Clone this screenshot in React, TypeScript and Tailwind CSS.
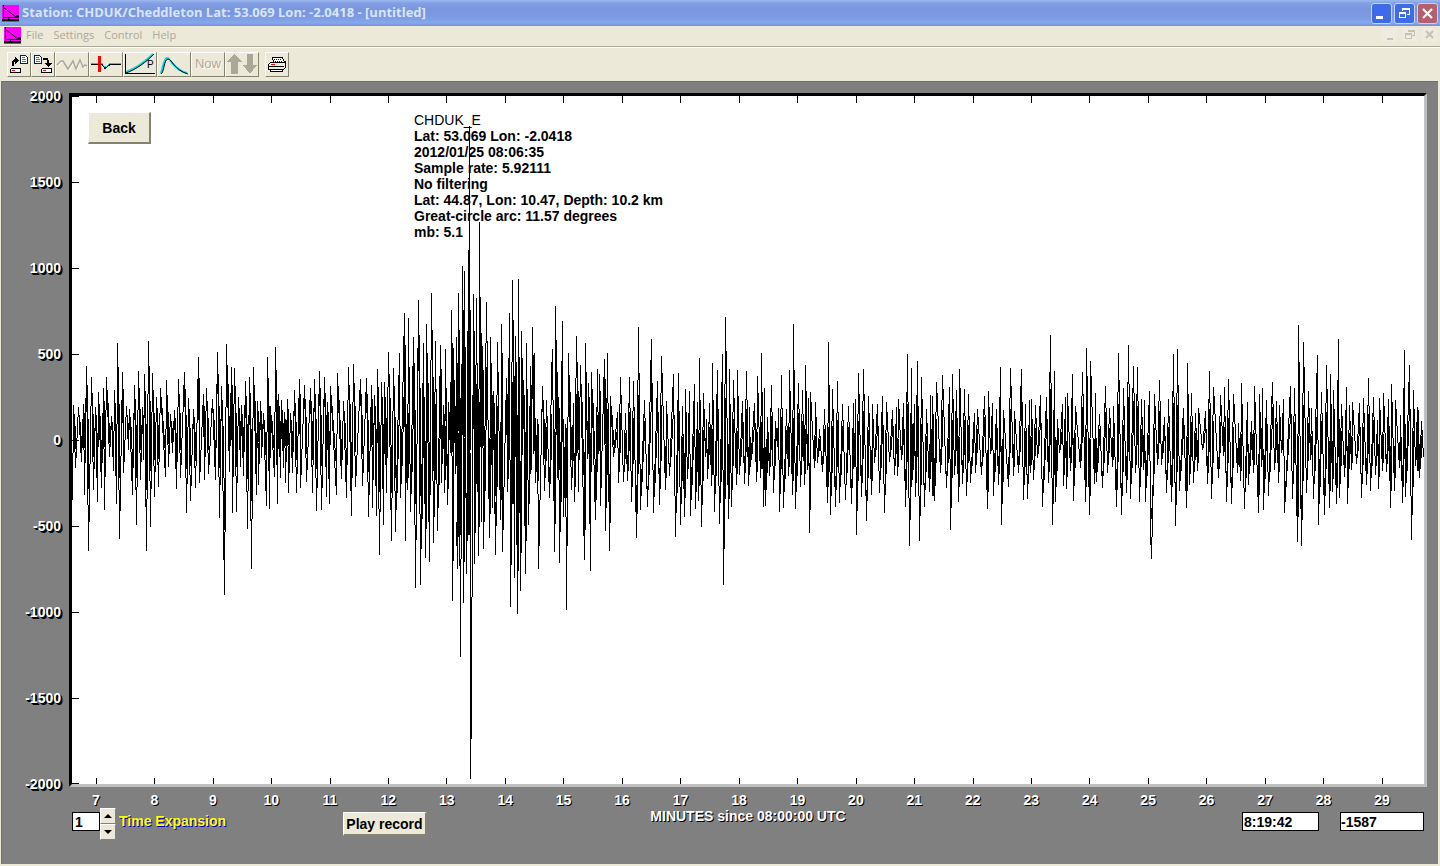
import { useState } from 'react';
import type { ReactNode } from 'react';

// Trace extremes as x, y pairs on the 1352 x 688 plot area (offset 72, 96)
const CRESTS = [
    73,405, 83,404, 86,366, 91,377, 95,407, 98,392, 103,388, 106,377, 111,416, 114,390, 117,343, 122,372, 129,409, 134,385, 138,371,
    142,407, 144,374, 148,341, 152,373, 156,397, 160,388, 166,380, 170,414, 174,410, 178,379, 184,372, 188,398, 193,409, 198,357,
    203,394, 206,388, 212,399, 217,352, 221,386, 226,344, 231,367, 234,368, 238,397, 241,405, 245,381, 249,377, 253,367, 257,401,
    260,401, 263,413, 267,357, 270,406, 275,347, 278,394, 281,400, 284,412, 287,399, 290,413, 294,390, 299,379, 304,385, 310,388,
    314,379, 319,371, 324,377, 327,402, 330,386, 337,373, 343,401, 348,367, 353,364, 360,379, 366,378, 371,385, 374,395, 377,369,
    381,382, 384,382, 388,352, 393,368, 399,353, 404,313, 408,318, 413,337, 418,300, 423,343, 426,324, 431,293, 435,341, 440,345,
    445,349, 448,402, 451,310, 453,348, 456,337, 458,293, 462,266, 464,271, 468,250, 469,126, 473,294, 476,298, 479,222, 482,346,
    486,302, 490,337, 493,391, 497,342, 501,324, 506,378, 509,313, 512,280, 515,336, 518,279, 521,331, 523,380, 526,343, 530,366,
    532,327, 534,353, 537,419, 542,386, 546,400, 551,374, 552,349, 555,306, 558,397, 562,321, 568,353, 576,336, 580,365, 585,343,
    588,383, 591,372, 597,369, 599,374, 604,359, 607,353, 610,396, 617,412, 620,377, 625,413, 629,377, 633,381, 638,327, 644,400,
    651,339, 657,381, 661,356, 666,401, 673,374, 678,373, 682,406, 685,389, 689,391, 694,384, 699,358, 703,393, 706,419, 712,363,
    717,370, 722,354, 725,317, 729,369, 733,380, 737,370, 742,401, 746,371, 749,407, 754,403, 757,376, 761,353, 764,388, 767,417,
    771,385, 775,421, 781,375, 786,409, 789,370, 793,324, 798,383, 802,390, 805,365, 808,398, 810,392, 815,402, 819,429, 824,409,
    828,342, 832,389, 837,381, 842,404, 848,406, 853,403, 855,399, 858,373, 863,369, 868,396, 872,404, 877,404, 882,396, 886,402,
    892,410, 898,399, 903,403, 907,354, 911,368, 917,361, 921,377, 926,409, 930,395, 932,396, 936,382, 942,375, 949,387, 952,374,
    956,390, 959,369, 964,389, 968,394, 974,413, 977,409, 984,396, 988,391, 992,403, 996,409, 1000,367, 1003,410, 1010,368, 1014,411,
    1021,369, 1025,404, 1029,400, 1031,399, 1035,405, 1040,395, 1046,397, 1050,335, 1054,371, 1057,419, 1062,404, 1065,397, 1067,393,
    1072,374, 1075,406, 1082,372, 1086,348, 1090,361, 1095,393, 1099,414, 1105,386, 1109,408, 1113,406, 1118,353, 1123,388, 1128,345,
    1133,366, 1137,367, 1141,399, 1144,400, 1149,391, 1154,394, 1159,380, 1164,417, 1168,399, 1173,354, 1177,349, 1183,408, 1187,363,
    1191,393, 1195,413, 1198,408, 1205,411, 1209,371, 1213,387, 1220,395, 1224,387, 1228,379, 1233,394, 1238,423, 1241,383, 1247,402,
    1254,386, 1259,394, 1262,388, 1266,400, 1272,382, 1279,405, 1283,399, 1290,386, 1294,388, 1298,325, 1303,342, 1308,391, 1311,408,
    1317,355, 1321,392, 1326,365, 1330,374, 1333,390, 1338,339, 1341,404, 1346,387, 1349,405, 1352,402, 1359,403, 1363,398, 1368,378,
    1373,397, 1379,398, 1383,393, 1388,399, 1391,384, 1395,400, 1400,415, 1404,350, 1409,365, 1413,390, 1417,407, 1421,421,
];

const TROUGHS = [
    72,500, 75,468, 81,462, 84,495, 88,551, 93,490, 97,502, 101,488, 104,510, 109,457, 113,471, 116,504, 119,539, 123,473, 128,450,
    132,495, 136,525, 140,480, 146,551, 150,527, 154,497, 158,487, 165,477, 172,453, 176,489, 180,478, 186,513, 190,501, 195,488,
    199,483, 204,480, 208,474, 215,480, 219,518, 224,595, 232,513, 236,512, 243,476, 247,529, 251,569, 256,495, 258,485, 261,458,
    266,506, 269,509, 274,477, 277,504, 280,478, 285,483, 288,493, 292,473, 296,493, 300,488, 306,482, 312,493, 316,511, 321,510,
    326,497, 329,504, 336,495, 341,479, 346,498, 351,516, 355,487, 362,486, 368,517, 372,508, 376,516, 379,555, 383,525, 386,493,
    391,541, 395,532, 400,498, 405,541, 407,490, 410,512, 415,588, 420,585, 425,558, 429,562, 433,543, 437,531, 441,483, 444,493,
    447,505, 452,601, 456,522, 457,569, 460,657, 463,603, 466,574, 468,535, 470,779, 471,698, 474,564, 478,556, 481,522, 483,549,
    489,538, 492,508, 495,555, 500,520, 502,552, 507,492, 510,607, 514,578, 517,614, 520,591, 525,574, 528,525, 531,470, 535,483,
    538,569, 544,491, 549,498, 554,552, 559,563, 563,517, 566,610, 571,490, 574,502, 578,492, 584,560, 590,571, 595,520, 600,506,
    605,531, 609,551, 613,457, 618,483, 623,482, 627,481, 631,502, 636,538, 640,510, 647,507, 653,513, 659,505, 665,490, 669,476,
    675,537, 680,525, 684,517, 687,479, 690,516, 695,509, 698,501, 701,527, 705,457, 707,479, 711,486, 714,512, 719,524, 723,585,
    728,519, 731,507, 736,485, 739,475, 744,484, 748,486, 750,467, 756,482, 760,478, 763,507, 765,506, 769,476, 773,493, 777,447,
    779,512, 783,508, 788,476, 792,495, 795,509, 800,487, 804,485, 809,533, 814,468, 817,463, 822,472, 827,503, 830,515, 835,507,
    839,503, 845,500, 851,504, 856,535, 861,497, 866,521, 871,495, 874,463, 879,493, 884,513, 889,462, 894,475, 897,476, 901,460,
    905,507, 909,546, 912,480, 915,497, 919,541, 924,507, 929,492, 932,496, 934,501, 940,473, 946,488, 950,530, 954,475, 958,502,
    962,484, 966,496, 970,483, 975,473, 981,475, 987,509, 993,496, 998,485, 1001,525, 1008,487, 1013,476, 1018,473, 1023,500,
    1027,499, 1033,480, 1037,458, 1042,507, 1048,483, 1052,525, 1055,502, 1059,453, 1063,486, 1066,489, 1070,471, 1073,501, 1080,468,
    1085,502, 1089,515, 1094,484, 1096,482, 1102,488, 1107,473, 1112,467, 1116,507, 1121,515, 1126,493, 1130,499, 1135,473, 1139,502,
    1145,502, 1150,530, 1151,559, 1152,515, 1157,465, 1161,465, 1166,493, 1171,502, 1175,526, 1179,491, 1186,508, 1189,485, 1193,483,
    1197,471, 1202,450, 1207,484, 1211,499, 1218,478, 1223,456, 1226,502, 1231,504, 1237,473, 1244,509, 1248,485, 1253,473, 1258,513,
    1263,510, 1268,496, 1274,470, 1278,483, 1284,513, 1292,499, 1297,542, 1301,546, 1306,493, 1313,499, 1318,525, 1324,515, 1329,508,
    1332,492, 1336,504, 1339,498, 1344,477, 1347,504, 1351,470, 1356,464, 1361,498, 1366,485, 1370,491, 1375,475, 1378,489, 1382,471,
    1386,472, 1390,508, 1394,491, 1399,468, 1402,503, 1405,497, 1411,540, 1417,471, 1419,478, 1423,457,
];

interface Sample {
    x: number;
    y: number;
    crest: boolean;
}

const toSamples = (list: number[], crest: boolean) => {
    const samples: Sample[] = [];
    for (let i = 0; i < list.length; i += 2) samples.push({ x: list[i], y: list[i + 1], crest });
    return samples;
};

// One vertical run per pixel column, so the trace stays sharp
function buildTrace() {
    const sorted = [...toSamples(CRESTS, true), ...toSamples(TROUGHS, false)].sort((a, b) => a.x - b.x);

    // The trace has to swing back between two neighbours on the same side
    const samples: Sample[] = [];
    sorted.forEach((sample, i) => {
        const prev = sorted[i - 1];
        if (prev && prev.crest === sample.crest && sample.x - prev.x > 1) {
            const swing = 12 + ((i * 17) % 30);
            samples.push({
                x: Math.round((prev.x + sample.x) / 2),
                y: sample.crest ? 440 + swing : 440 - swing,
                crest: !sample.crest,
            });
        }
        samples.push(sample);
    });

    const limit = (y: number) => Math.round(Math.min(590, Math.max(310, 440 + (y - 440) * 0.75)));

    let d = '';
    for (let i = 1; i < samples.length; i++) {
        const from = samples[i - 1];
        const to = samples[i];
        const steps = Math.max(1, to.x - from.x);
        const busy = from.x > 388 && from.x < 612;
        const wide = busy ? i % 3 !== 0 : i % 2 === 0;
        for (let s = 0; s <= steps; s++) {
            const start = Math.max(0, (s - 0.5) / steps);
            const end = Math.min(1, (s + 0.5) / steps);
            const y1 = Math.round(from.y + (to.y - from.y) * start);
            const y2 = Math.round(from.y + (to.y - from.y) * end);
            d += `M${from.x + s + 0.5} ${y1}V${y2}`;
            if (wide && s < steps) d += `M${from.x + s + 1.5} ${limit(y1)}V${limit(y2)}`;
        }
    }
    return d;
}

const TRACE = buildTrace();

const MINUTES = Array.from({ length: 23 }, (_, i) => i + 7);
const COUNTS = [2000, 1500, 1000, 500, 0, -500, -1000, -1500, -2000];
const MENU = ['File', 'Settings', 'Control', 'Help'];
const INFO = [
    'Lat: 53.069 Lon: -2.0418',
    '2012/01/25 08:06:35',
    'Sample rate: 5.92111',
    'No filtering',
    'Lat: 44.87, Lon: 10.47, Depth: 10.2 km',
    'Great-circle arc: 11.57 degrees',
    'mb: 5.1',
];

const raised = 'bg-[#ece9d8] border border-t-white border-l-white border-r-[#85826f] border-b-[#85826f]';

function AppIcon() {
    return (
        <svg width="17" height="17" viewBox="0 0 17 17" className="shrink-0" aria-hidden="true">
            <rect width="17" height="17" fill="#ff00ff" />
            <path d="M1 2L14 12" stroke="#000" fill="none" />
            <path d="M1.500 0v15M1 12.500h15M6.500 12v2" stroke="#000" fill="none" shapeRendering="crispEdges" />
            <path d="M0 14h17v2H0zM14 10h3v3h-3z" fill="#000" shapeRendering="crispEdges" />
        </svg>
    );
}

function ToolButton({ label, className, children }: { label: string; className: string; children: ReactNode }) {
    return (
        <button type="button" aria-label={label} className={`${raised} flex h-[25px] items-center justify-center ${className}`}>
            {children}
        </button>
    );
}

function Page({ x }: { x: number }) {
    return (
        <g transform={`translate(${x} 2)`}>
            <path d="M.5.5h5l2 2v6h-7z" fill="#fff" stroke="#00204a" />
            <path d="M2 2.500h3M2 4.500h4M2 6.500h4" stroke="#0090b0" />
        </g>
    );
}

function Drive({ x }: { x: number }) {
    return (
        <g transform={`translate(${x} 15)`}>
            <path d="M1.500.5h9v4h-10v-3z" fill="#fff" stroke="#000" />
            <path d="M2 2.500h3" stroke="#f00" />
        </g>
    );
}

function Toolbar() {
    return (
        <div className="flex h-[33px] items-center border-t border-white bg-[#ece9d8] px-[7px]">
            <ToolButton label="Open record" className="w-6">
                <svg width="22" height="22" viewBox="0 0 22 22" shapeRendering="crispEdges">
                    <Page x={12} />
                    <path d="M5 13V9l2-2h2" fill="none" stroke="#000" strokeWidth="2" />
                    <path d="M7 4l4 3-4 4z" />
                    <Drive x={2} />
                </svg>
            </ToolButton>
            <ToolButton label="Save record" className="w-6">
                <svg width="22" height="22" viewBox="0 0 22 22" shapeRendering="crispEdges">
                    <Page x={2} />
                    <path d="M11 6h4l1 2v3" fill="none" stroke="#000" strokeWidth="2" />
                    <path d="M12 10h8l-4 4z" />
                    <Drive x={9} />
                </svg>
            </ToolButton>
            <ToolButton label="Filter" className="w-[34px]">
                <svg width="32" height="22" viewBox="0 0 32 22">
                    <path d="M1 12l4-4h2l5 8 5-8 3 8 4-9 3 7 2-2 2 1" fill="none" stroke="#fff" transform="translate(1 1)" />
                    <path d="M1 12l4-4h2l5 8 5-8 3 8 4-9 3 7 2-2 2 1" fill="none" stroke="#aca899" strokeWidth="1.500" />
                </svg>
            </ToolButton>
            <ToolButton label="Pick arrival" className="w-[34px]">
                <svg width="32" height="22" viewBox="0 0 32 22" shapeRendering="crispEdges">
                    <path d="M1 10.500h11l3 4 5-4h11" fill="none" stroke="#00d8e8" />
                    <path d="M1 11.500h11l3 4 5-4h11" fill="none" stroke="#000" />
                    <path d="M8 3h3v16H8z" fill="#f00" />
                </svg>
            </ToolButton>
            <ToolButton label="Travel times" className="w-[34px]">
                <svg width="32" height="22" viewBox="0 0 32 22">
                    <path d="M2 19C13 15 22 8 29 1" fill="none" stroke="#00d8e8" strokeWidth="2" />
                    <path d="M2 20C13 16 22 9 30 1" fill="none" stroke="#000" />
                    <path d="M1.500 1v19.500H31" fill="none" stroke="#000" shapeRendering="crispEdges" />
                    <text x="23" y="15" fontSize="10" fontFamily="Liberation Sans">P</text>
                </svg>
            </ToolButton>
            <ToolButton label="Spectrum" className="w-[34px]">
                <svg width="32" height="22" viewBox="0 0 32 22">
                    <path d="M2 20C5 20 5 5 9 5s6 12 20 15" fill="none" stroke="#00d8e8" strokeWidth="2" />
                    <path d="M3 21C6 20 6 6 10 6s6 11 20 15" fill="none" stroke="#000" />
                </svg>
            </ToolButton>
            <ToolButton label="Now" className="w-[34px]">
                <span className="font-['Liberation_Sans'] text-[13px] text-[#aca899] [text-shadow:1px_1px_0_#fff]">Now</span>
            </ToolButton>
            <ToolButton label="Scale up or down" className="w-[34px]">
                <svg width="32" height="22" viewBox="0 0 32 22" fill="#aca899" shapeRendering="crispEdges">
                    <path d="M8 1l8 8h-4v12H5V9H1zM21 1h6v11h4l-7 9-7-9h4z" />
                </svg>
            </ToolButton>
            <ToolButton label="Print" className="ml-[6px] w-6">
                <svg width="22" height="22" viewBox="0 0 22 22" shapeRendering="crispEdges">
                    <path d="M6.500 4.500h10l2 5h-11z" fill="#fff" stroke="#000" />
                    <path d="M8 6.500h8M9 8.500h8" stroke="#0000a0" strokeDasharray="1 1" />
                    <path d="M4.500 9.500h13l2-1v6l-2 2h-15v-5z" fill="#ece9d8" stroke="#000" />
                    <path d="M4.500 16.500h12v2h-12zM3 13.500h15" fill="#fff" stroke="#000" />
                    <path d="M5 11.500h4" stroke="#f00" />
                </svg>
            </ToolButton>
        </div>
    );
}

function TitleBar() {
    const box = 'flex size-[21px] items-center justify-center rounded-[3px] border border-[#c5d3f5]';
    return (
        <header className="flex h-[26px] items-center bg-[linear-gradient(#9cb8ee_0%,#83a0e4_12%,#7996de_35%,#7c9ae2_65%,#86a8ec_88%,#7890d6_100%)] px-[2px]">
            <AppIcon />
            <h1 className="ml-[3px] flex-1 font-['Open_Sans'] text-[13px] font-bold text-[#d8e4f8]">
                Station: CHDUK/Cheddleton Lat: 53.069 Lon: -2.0418 - [untitled]
            </h1>
            <div className="flex gap-[2px]">
                <button type="button" aria-label="Minimize" className={`${box} bg-[#3f6be8]`}>
                    <svg width="15" height="15" shapeRendering="crispEdges"><path d="M2 10h7v3H2z" fill="#fff" /></svg>
                </button>
                <button type="button" aria-label="Restore" className={`${box} bg-[#3f6be8]`}>
                    <svg width="15" height="15" shapeRendering="crispEdges" fill="none" stroke="#fff">
                        <path d="M5.500 5V2.500h7v6H10M5 3.500h8M2.500 6.500h6v5h-6zM2 7.500h7" />
                    </svg>
                </button>
                <button type="button" aria-label="Close" className={`${box} bg-[#b5606e]`}>
                    <svg width="15" height="15"><path d="M3 3l9 9M12 3l-9 9" stroke="#fff" strokeWidth="2.200" /></svg>
                </button>
            </div>
        </header>
    );
}

function MenuBar() {
    return (
        <nav className="flex h-[21px] items-center border-b border-[#aca899] bg-[#ece9d8] pr-[3px] pb-[2px] pl-1">
            <AppIcon />
            <ul className="ml-[5px] flex flex-1 gap-[10px] font-['Open_Sans'] text-[11px] leading-4 text-[#aca899]">
                {MENU.map((item) => (
                    <li key={item}>
                        <button type="button">{item}</button>
                    </li>
                ))}
            </ul>
            <div className="flex gap-[5px]">
                <button type="button" aria-label="Minimize record" className="bg-[#eeece0]">
                    <svg width="15" height="14" shapeRendering="crispEdges"><path d="M5 10h6v2H5z" fill="#c5c2b4" /></svg>
                </button>
                <button type="button" aria-label="Restore record" className="bg-[#eeece0]">
                    <svg width="15" height="14" shapeRendering="crispEdges" fill="none" stroke="#c5c2b4">
                        <path d="M6.500 4V2.500h6v5H10M6 3.500h7M3.500 5.500h6v5h-6zM3 6.500h7" />
                    </svg>
                </button>
                <button type="button" aria-label="Close record" className="bg-[#eeece0]">
                    <svg width="15" height="14"><path d="M4 3l7 7M11 3l-7 7" stroke="#c5c2b4" strokeWidth="2" /></svg>
                </button>
            </div>
        </nav>
    );
}

function Seismogram() {
    return (
        <svg
            viewBox="72 96 1352 688"
            preserveAspectRatio="none"
            shapeRendering="crispEdges"
            className="absolute inset-0 h-full w-full"
            fill="none"
            stroke="#000"
            role="img"
            aria-label="Seismogram"
        >
            <path d={TRACE} />
            {MINUTES.map((minute, i) => {
                const x = Math.floor(96.2 + i * 58.455) + 0.5;
                return <path key={minute} d={`M${x} 96v7M${x} 778v6`} />;
            })}
            {COUNTS.map((count, i) => (
                <path key={count} d={`M72 ${Math.min(96 + i * 86, 783) + 0.5}h7`} />
            ))}
        </svg>
    );
}

export default function App() {
    const [expansion, setExpansion] = useState(1);

    return (
        <div className="flex min-h-screen flex-col bg-[#ece9d8] font-['Liberation_Sans',sans-serif] text-black">
            <TitleBar />
            <MenuBar />
            <Toolbar />

            <main className="mt-px mr-[2px] mb-[2px] ml-px flex flex-1 flex-col border-t border-l border-[#716f64] bg-[#808080] pt-[11px] pr-[11px] pl-px">
                <div className="flex flex-1">
                    {/* Amplitude scale */}
                    <ul className="-my-[5px] flex w-[66px] flex-col justify-between pr-2 text-right text-sm leading-4 font-bold text-white [text-shadow:1px_1px_0_#000,2px_2px_0_#000]">
                        {COUNTS.map((count) => (
                            <li key={count}>{count}</li>
                        ))}
                    </ul>

                    <section className="relative flex-1 border-[3px] border-t-black border-r-[#c0c0c0] border-b-[#c0c0c0] border-l-black bg-white">
                        <Seismogram />
                        <button type="button" className={`${raised} absolute top-4 left-4 h-8 w-[63px] border-r-2 border-b-2 text-sm font-bold`}>
                            Back
                        </button>
                        <div className="absolute top-4 left-[342px] text-sm leading-4 font-bold whitespace-nowrap">
                            <p className="font-normal">CHDUK_E</p>
                            {INFO.map((line) => (
                                <p key={line}>{line}</p>
                            ))}
                        </div>
                    </section>
                </div>

                {/* Time scale */}
                <ul className="mt-[5px] mr-[29px] ml-[77px] flex justify-between text-sm leading-4 font-bold text-white [text-shadow:1px_1px_0_#000]">
                    {MINUTES.map((minute) => (
                        <li key={minute} className="w-8 text-center">{minute}</li>
                    ))}
                </ul>

                <div className="mr-[3px] mb-6 ml-[69px] grid grid-cols-[1fr_auto_1fr] items-start">
                    <div className="flex items-start">
                        <input
                            id="expansion"
                            className="mt-1 h-[19px] w-7 border border-black bg-white px-[2px] text-sm leading-4 font-bold"
                            value={expansion}
                            onChange={(e) => setExpansion(Number(e.target.value) || 1)}
                        />
                        <div className="flex flex-col">
                            <button type="button" aria-label="Increase" onClick={() => setExpansion(expansion + 1)} className={`${raised} flex h-4 w-4 items-center justify-center`}>
                                <svg width="8" height="4"><path d="M4 0l4 4H0z" /></svg>
                            </button>
                            <button type="button" aria-label="Decrease" onClick={() => setExpansion(Math.max(1, expansion - 1))} className={`${raised} flex h-4 w-4 items-center justify-center`}>
                                <svg width="8" height="4"><path d="M0 0h8L4 4z" /></svg>
                            </button>
                        </div>
                        <label htmlFor="expansion" className="mt-[5px] ml-[3px] w-28 text-sm leading-4 font-bold whitespace-nowrap text-[#ffff00] [text-shadow:1px_1px_0_#0000c0]">
                            Time Expansion
                        </label>
                        <button type="button" className={`${raised} mt-1 ml-28 h-6 w-[84px] border-r-2 border-b-2 text-sm font-bold whitespace-nowrap`}>
                            Play record
                        </button>
                    </div>
                    <p className="text-sm leading-4 font-bold text-white [text-shadow:1px_1px_0_#000]">MINUTES since 08:00:00 UTC</p>
                    <div className="flex justify-end gap-[21px] pt-1">
                        <input aria-label="Cursor time" readOnly value="8:19:42" className="h-[19px] w-[77px] border border-black bg-white px-px text-sm leading-4 font-bold" />
                        <input aria-label="Cursor amplitude" readOnly value="-1587" className="h-[19px] w-[84px] border border-black bg-white text-sm leading-4 font-bold" />
                    </div>
                </div>
            </main>
        </div>
    );
}
